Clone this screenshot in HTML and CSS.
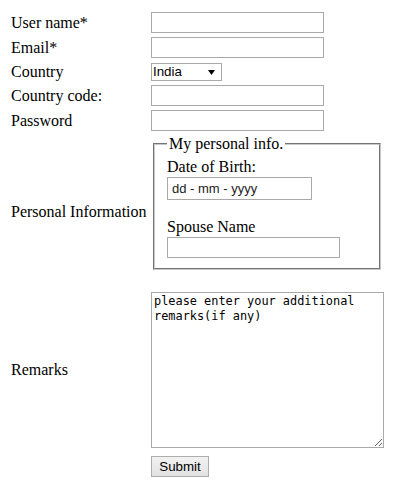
FILE: index.html
```html
<!DOCTYPE html>
<html>
<head>
<meta charset="utf-8">
<link rel="stylesheet" href="styles.css">
</head>
<body>
<form class="form">
  <label class="lbl" for="user">User name*</label>
  <div class="ctl"><input id="user" class="txt" type="text"></div>

  <label class="lbl" for="email">Email*</label>
  <div class="ctl"><input id="email" class="txt" type="text"></div>

  <label class="lbl" for="country">Country</label>
  <div class="ctl">
    <span class="select-wrap">
      <select id="country" class="sel"><option>India</option></select>
      <svg class="arrow" width="7" height="5" viewBox="0 0 7 5"><path d="M0 0H7L3.5 5Z" fill="#000"/></svg>
    </span>
  </div>

  <label class="lbl" for="code">Country code:</label>
  <div class="ctl"><input id="code" class="txt" type="text"></div>

  <label class="lbl" for="pass">Password</label>
  <div class="ctl"><input id="pass" class="txt" type="password"></div>

  <div class="lbl">Personal Information</div>
  <div class="ctl ctl-fieldset">
    <fieldset class="info">
      <legend class="legend">My personal info.</legend>
      <label class="flbl" for="dob">Date of Birth:</label>
      <input id="dob" class="txt date" type="text" placeholder="dd - mm - yyyy">
      <label class="flbl spouse-lbl" for="spouse">Spouse Name</label>
      <input id="spouse" class="txt spouse" type="text">
    </fieldset>
  </div>

  <label class="lbl" for="remarks">Remarks</label>
  <div class="ctl"><textarea id="remarks" class="remarks">please enter your additional remarks(if any)</textarea></div>

  <div></div>
  <div class="ctl"><button class="btn" type="submit">Submit</button></div>
</form>
</body>
</html>
```

FILE: styles.css
```css
html, body {
  margin: 0;
  padding: 0;
  background: #fff;
}

body {
  font-family: "Liberation Serif", "Times New Roman", serif;
  font-size: 16px;
  line-height: 18px;
  color: #000;
}

.form {
  display: grid;
  grid-template-columns: 140px auto;
  justify-content: start;
  align-items: center;
  row-gap: 4px;
  padding: 12px 0 0 11px;
}

.lbl {
  display: block;
}

.ctl {
  display: flex;
  align-items: flex-start;
}

.txt {
  box-sizing: border-box;
  width: 173px;
  height: 21px;
  margin: 0;
  padding: 1px 3px;
  border: 1px solid #a9a9a9;
  border-radius: 0;
  background: #fff;
  font-family: "Liberation Sans", Arial, sans-serif;
  font-size: 13px;
  color: #000;
  outline: none;
}

.select-wrap {
  position: relative;
  display: inline-block;
  margin-top: 1px;
}

.sel {
  -webkit-appearance: none;
  appearance: none;
  box-sizing: border-box;
  width: 71px;
  height: 18px;
  margin: 0;
  padding: 0 0 0 1px;
  border: 1px solid #a9a9a9;
  border-radius: 0;
  background: #fff;
  font-family: "Liberation Sans", Arial, sans-serif;
  font-size: 13.33px;
  line-height: 16px;
  color: #000;
  display: block;
  outline: none;
}

.arrow {
  position: absolute;
  left: 57px;
  top: 7px;
  pointer-events: none;
}

.ctl-fieldset {
  padding-bottom: 18px;
}

.info {
  box-sizing: border-box;
  width: 228px;
  margin: 0 0 0 2px;
  padding: 5px 12px 10px 12px;
  border: 2px groove #c8c8c8;
  display: flex;
  flex-direction: column;
  align-items: flex-start;
  min-width: 0;
}

.legend {
  padding: 0 2px;
  line-height: 18px;
}

.flbl {
  display: block;
  line-height: 18px;
}

.date {
  width: 145px;
  height: 23px;
  margin-top: 1px;
  padding: 1px 4px;
}

.date::placeholder {
  color: #222;
  opacity: 1;
}

.spouse-lbl {
  margin-top: 18px;
}

.spouse {
  margin-top: 1px;
}

.remarks {
  box-sizing: border-box;
  width: 233px;
  height: 156px;
  margin: 0;
  padding: 1px 2px;
  border: 1px solid #a9a9a9;
  border-radius: 0;
  font-family: "DejaVu Sans Mono", "Liberation Mono", monospace;
  font-size: 11.9px;
  line-height: 15px;
  color: #000;
  resize: both;
  outline: none;
}

.btn {
  box-sizing: border-box;
  width: 58px;
  height: 21px;
  margin: 4px 0 0 0;
  padding: 0;
  border: 1px solid #adadad;
  border-radius: 0;
  background: linear-gradient(#f2f2f2, #e2e2e2);
  font-family: "Liberation Sans", Arial, sans-serif;
  font-size: 13.33px;
  color: #000;
}
```
